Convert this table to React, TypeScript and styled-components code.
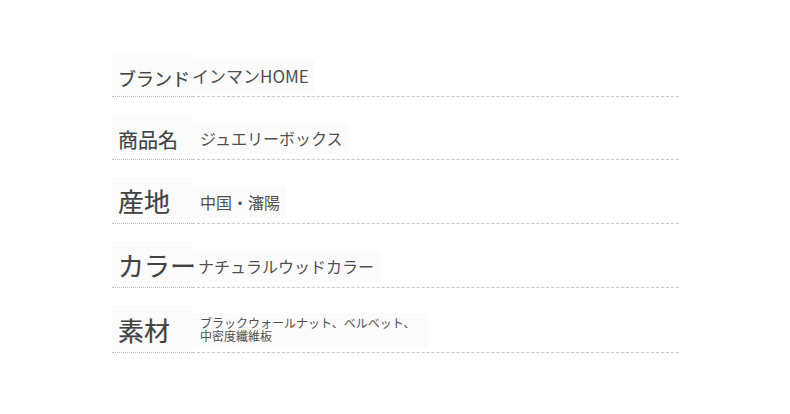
import React from "react";
import styled, { createGlobalStyle } from "styled-components";

const Global = createGlobalStyle`
  html, body { margin: 0; padding: 0; background: #ffffff; }
  body { font-family: "Noto Sans CJK JP", "Noto Sans", sans-serif; }
`;

const Page = styled.div`
  padding: 53px 0 40px 112px;
`;

const SpecList = styled.dl`
  margin: 0;
  width: 567px;
  display: flex;
  flex-direction: column;
  gap: 17px;
`;

const Row = styled.div<{ $h: number }>`
  display: flex;
  align-items: stretch;
  height: ${(p) => p.$h}px;
`;

const Label = styled.dt<{ $size: number }>`
  flex: 0 0 80px;
  min-width: 0;
  box-sizing: border-box;
  display: flex;
  align-items: center;
  padding: ${(p) => (p.$size > 22 ? 2 : 6)}px 0 0 6px;
  background: #fbfbfb;
  border-bottom: 1px dotted #bdbdbd;
  color: #424242;
  font-size: ${(p) => p.$size}px;
  font-weight: 400;
  line-height: 1;
  white-space: nowrap;
  position: relative;
  z-index: 1;
  -webkit-text-stroke: 0.2px #424242;
`;

const ValueCell = styled.dd`
  flex: 1;
  min-width: 0;
  margin: 0;
  display: flex;
  align-items: center;
  padding-top: 3px;
  border-bottom: 1px dashed #c9c9c9;
`;

const ValueBox = styled.div<{ $size: number; $pl: number }>`
  max-width: 236px;
  box-sizing: border-box;
  padding: ${(p) => (p.$size >= 14 ? 4 : 3)}px 6px ${(p) => (p.$size >= 14 ? 4 : 5)}px ${(p) => p.$pl}px;
  background: #fbfbfb;
  color: #505050;
  font-size: ${(p) => p.$size}px;
  font-weight: 400;
  line-height: ${(p) => (p.$size >= 14 ? 1.5 : 1.1)};
`;

type Spec = {
  label: string;
  labelSize: number;
  value: string;
  valueSize: number;
  pl: number;
  h: number;
};

const specs: Spec[] = [
  { label: "ブランド", labelSize: 18, value: "インマンHOME", valueSize: 17, pl: 0, h: 44 },
  { label: "商品名", labelSize: 20, value: "ジュエリーボックス", valueSize: 16, pl: 8, h: 46 },
  { label: "産地", labelSize: 26, value: "中国・瀋陽", valueSize: 16, pl: 8, h: 47 },
  { label: "カラー", labelSize: 26, value: "ナチュラルウッドカラー", valueSize: 16, pl: 6, h: 47 },
  {
    label: "素材",
    labelSize: 26,
    value: "ブラックウォールナット、ベルベット、中密度纖維板",
    valueSize: 12,
    pl: 8,
    h: 48,
  },
];

export default function App() {
  return (
    <>
      <Global />
      <Page>
        <SpecList>
          {specs.map((s) => (
            <Row key={s.label} $h={s.h}>
              <Label $size={s.labelSize}>{s.label}</Label>
              <ValueCell>
                <ValueBox $size={s.valueSize} $pl={s.pl}>
                  {s.value}
                </ValueBox>
              </ValueCell>
            </Row>
          ))}
        </SpecList>
      </Page>
    </>
  );
}
